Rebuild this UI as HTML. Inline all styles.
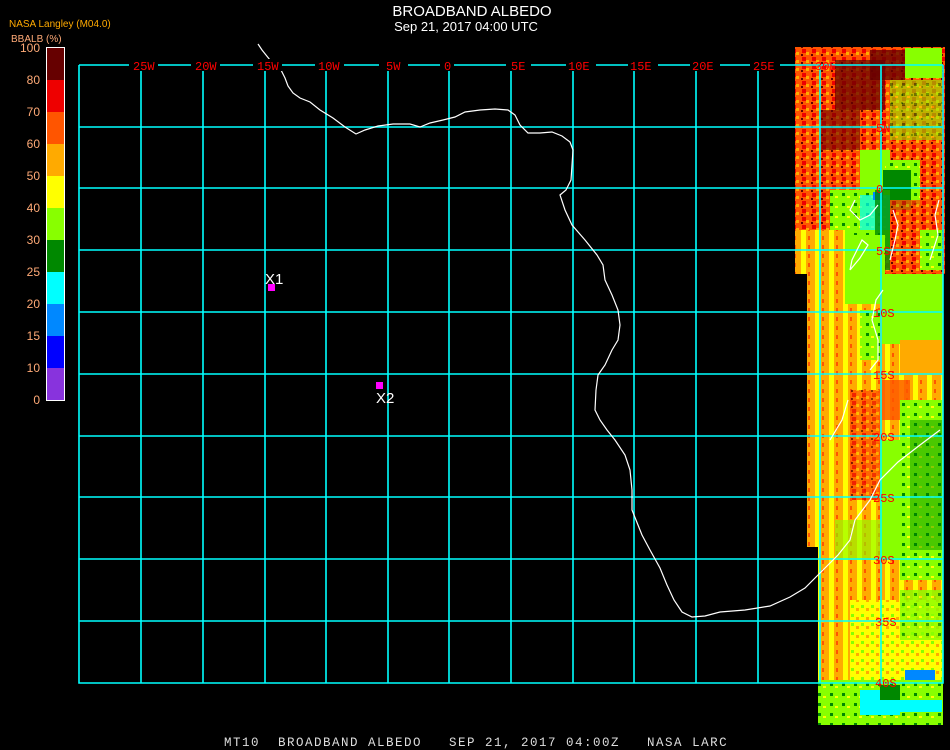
<!DOCTYPE html>
<html><head><meta charset="utf-8"><style>
html,body{margin:0;padding:0;background:#000;width:950px;height:750px;overflow:hidden}
svg{display:block}
</style></head><body>
<svg width="950" height="750" xmlns="http://www.w3.org/2000/svg" font-family="Liberation Sans, sans-serif">
<rect width="950" height="750" fill="#000"/>
<defs>
<pattern id="st1" width="14" height="9" patternUnits="userSpaceOnUse">
<rect width="14" height="9" fill="#ffaa00"/><rect x="3" width="5" height="9" fill="#ffff00"/><rect x="10" y="2" width="2" height="4" fill="#ff5500"/>
</pattern>
<pattern id="st2" width="12" height="10" patternUnits="userSpaceOnUse">
<rect width="12" height="10" fill="#88ff00"/><rect x="2" y="3" width="3" height="3" fill="#008800"/><rect x="7" y="6" width="3" height="2" fill="#ffff00"/>
</pattern>
<pattern id="st3" width="10" height="8" patternUnits="userSpaceOnUse">
<rect width="10" height="8" fill="#ff5500"/><rect x="2" y="1" width="4" height="4" fill="#ee0000"/><rect x="6" y="4" width="3" height="3" fill="#ffaa00"/><rect x="1" y="6" width="2" height="2" fill="#660000"/>
</pattern>
<pattern id="st4" width="10" height="9" patternUnits="userSpaceOnUse">
<rect width="10" height="9" fill="#ffff00"/><rect x="1" y="2" width="3" height="3" fill="#88ff00"/><rect x="6" y="5" width="3" height="3" fill="#ffaa00"/>
</pattern>
</defs>
<rect x="795" y="47" width="150" height="227" fill="url(#st3)"/>
<rect x="807" y="274" width="12" height="273" fill="url(#st1)"/>
<rect x="818" y="274" width="125" height="451" fill="url(#st1)"/>
<rect x="835" y="60" width="50" height="50" fill="#660000" opacity=".75"/>
<rect x="870" y="50" width="35" height="30" fill="#660000" opacity=".8"/>
<rect x="820" y="110" width="40" height="40" fill="#660000" opacity=".6"/>
<rect x="890" y="80" width="52" height="60" fill="url(#st2)" opacity=".55"/>
<rect x="905" y="48" width="37" height="30" fill="#88ff00"/>
<rect x="860" y="150" width="30" height="60" fill="#88ff00"/>
<rect x="885" y="160" width="35" height="45" fill="url(#st2)"/>
<rect x="883" y="170" width="28" height="40" fill="#008800"/>
<rect x="830" y="190" width="60" height="60" fill="url(#st2)"/>
<rect x="860" y="195" width="30" height="35" fill="#00ffff" opacity=".7"/>
<rect x="873" y="192" width="10" height="8" fill="#0088ff"/>
<rect x="875" y="190" width="15" height="80" fill="#008800" opacity=".8"/>
<rect x="795" y="230" width="50" height="44" fill="url(#st1)"/>
<rect x="845" y="235" width="40" height="60" fill="#88ff00"/>
<rect x="890" y="200" width="50" height="70" fill="url(#st3)" opacity=".8"/>
<rect x="920" y="230" width="22" height="40" fill="url(#st2)"/>
<rect x="845" y="274" width="35" height="30" fill="#88ff00"/>
<rect x="882" y="274" width="60" height="70" fill="#88ff00"/>
<rect x="900" y="340" width="42" height="35" fill="#ffaa00"/>
<rect x="860" y="310" width="20" height="50" fill="url(#st2)"/>
<rect x="850" y="390" width="30" height="110" fill="url(#st3)" opacity=".8"/>
<rect x="880" y="380" width="30" height="40" fill="#ff5500" opacity=".8"/>
<rect x="900" y="400" width="42" height="180" fill="url(#st2)"/>
<rect x="910" y="420" width="32" height="130" fill="#008800" opacity=".45"/>
<rect x="880" y="440" width="22" height="120" fill="#88ff00"/>
<rect x="835" y="520" width="45" height="60" fill="#88ff00" opacity=".6"/>
<rect x="830" y="560" width="70" height="55" fill="url(#st1)"/>
<rect x="850" y="600" width="92" height="80" fill="url(#st4)"/>
<rect x="900" y="590" width="42" height="50" fill="url(#st2)" opacity=".8"/>
<rect x="818" y="680" width="125" height="45" fill="url(#st2)"/>
<rect x="860" y="690" width="40" height="25" fill="#00ffff"/>
<rect x="895" y="700" width="47" height="12" fill="#00ffff"/>
<rect x="905" y="670" width="30" height="10" fill="#0088ff"/>
<rect x="880" y="685" width="20" height="15" fill="#008800"/>
<g stroke="#00ffff" stroke-width="1.6" fill="none">
<path d="M79 65V683H943V65"/>
<path d="M141 65V683M203 65V683M265 65V683M326 65V683M388 65V683M449 65V683M511 65V683M573 65V683M634 65V683M696 65V683M758 65V683M820 65V683M881 65V683"/>
<path d="M79 127H943M79 188H943M79 250H943M79 312H943M79 374H943M79 436H943M79 497H943M79 559H943M79 621H943M79 65H943"/>
</g>
<g fill="none" stroke="#fff" stroke-width="1.2">
<polyline points="258,44 262,50 266,55 270,60 276,65 281,70 285,78 288,86 293,93 300,98 310,102 320,110 333,118 345,127 356,134 365,130 378,126 393,124 410,124 420,127 430,123 443,120 455,117 465,112 480,110 495,109 508,110 515,115 520,125 528,133 540,133 552,132 562,136 570,142 573,150 572,165 571,180 566,190 560,195 565,210 572,225 585,240 597,255 603,265 605,280 612,295 618,310 620,325 618,340 612,350 605,365 598,375 596,390 595,410 600,420 607,430 615,440 625,455 630,470 632,490 632,510 636,520 642,535 650,550 660,568 667,585 674,600 682,612 692,617 705,616 720,612 745,610 770,606 790,597 805,588 820,573 838,555 850,540 855,520 870,500 880,480 898,462 920,445 940,430"/>
<polyline points="850,270 860,258 868,245 862,240 852,260 850,270"/>
<polyline points="830,440 842,420 848,400"/>
<polyline points="870,370 878,360 878,340 872,320 876,300 883,290"/>
<polyline points="890,260 895,240 898,225 893,210"/>
<polyline points="855,200 850,210 860,220 870,215 878,205"/>
<polyline points="939,200 935,215 938,235 930,260"/>
</g>
<g font-family="Liberation Mono, monospace" font-size="12" fill="#ff0000">
<g fill="#000"><rect x="129" y="59" width="29" height="12"/><rect x="191" y="59" width="29" height="12"/><rect x="253" y="59" width="29" height="12"/><rect x="315" y="59" width="29" height="12"/><rect x="379" y="59" width="29" height="12"/><rect x="440" y="59" width="14" height="12"/><rect x="506" y="59" width="25" height="12"/><rect x="566" y="59" width="30" height="12"/><rect x="628" y="59" width="30" height="12"/><rect x="690" y="59" width="30" height="12"/><rect x="750" y="59" width="30" height="12"/></g>
<text x="133" y="70">25W</text><text x="195" y="70">20W</text><text x="257" y="70">15W</text><text x="318" y="70">10W</text><text x="386" y="70">5W</text><text x="444" y="70">0</text><text x="511" y="70">5E</text><text x="568" y="70">10E</text><text x="630" y="70">15E</text><text x="692" y="70">20E</text><text x="753" y="70">25E</text>
<text x="815" y="70">30E</text>
<text x="876" y="132">5N</text><text x="876" y="193">0</text><text x="876" y="255">5S</text>
<text x="873" y="317">10S</text><text x="873" y="379">15S</text><text x="873" y="441">20S</text><text x="873" y="502">25S</text><text x="873" y="564">30S</text><text x="875" y="626">35S</text><text x="875" y="687">40S</text>
</g>
<rect x="268" y="284" width="7" height="7" fill="#ff00ff"/>
<text x="265" y="284" font-size="15" fill="#fff">X1</text>
<rect x="376" y="382" width="7" height="7" fill="#ff00ff"/>
<text x="376" y="403" font-size="15" fill="#fff">X2</text>
<text x="472" y="16" font-size="15" fill="#fff" text-anchor="middle">BROADBAND ALBEDO</text>
<text x="466" y="31" font-size="13" fill="#fff" text-anchor="middle">Sep 21, 2017 04:00 UTC</text>
<text x="9" y="27" font-size="10" fill="#ffaa00">NASA Langley (M04.0)</text>
<text x="11" y="42" font-size="10" fill="#ffaa77">BBALB (%)</text>
<g>
<rect x="46" y="48" width="18" height="32" fill="#660000"/>
<rect x="46" y="80" width="18" height="32" fill="#ee0000"/>
<rect x="46" y="112" width="18" height="32" fill="#ff5500"/>
<rect x="46" y="144" width="18" height="32" fill="#ffaa00"/>
<rect x="46" y="176" width="18" height="32" fill="#ffff00"/>
<rect x="46" y="208" width="18" height="32" fill="#88ff00"/>
<rect x="46" y="240" width="18" height="32" fill="#008800"/>
<rect x="46" y="272" width="18" height="32" fill="#00ffff"/>
<rect x="46" y="304" width="18" height="32" fill="#0088ff"/>
<rect x="46" y="336" width="18" height="32" fill="#0000ff"/>
<rect x="46" y="368" width="18" height="32" fill="#8833dd"/>
<rect x="46.5" y="47.5" width="18" height="353" fill="none" stroke="#fff" stroke-width="1"/>
</g>
<g font-size="12" fill="#ffaa77" text-anchor="end">
<text x="40" y="52">100</text><text x="40" y="84">80</text><text x="40" y="116">70</text><text x="40" y="148">60</text><text x="40" y="180">50</text><text x="40" y="212">40</text><text x="40" y="244">30</text><text x="40" y="276">25</text><text x="40" y="308">20</text><text x="40" y="340">15</text><text x="40" y="372">10</text><text x="40" y="404">0</text>
</g>
<text x="224" y="746" font-family="Liberation Mono, monospace" font-size="12.5" letter-spacing="1.5" fill="#ddd" xml:space="preserve">MT10  BROADBAND ALBEDO   SEP 21, 2017 04:00Z   NASA LARC</text>
</svg>
</body></html>
